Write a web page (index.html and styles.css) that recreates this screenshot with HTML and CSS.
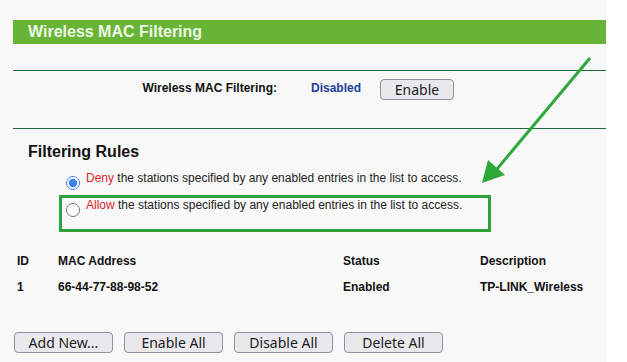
FILE: index.html
```html
<!DOCTYPE html>
<html lang="en">
<head>
  <meta charset="UTF-8">
  <title>Wireless MAC Filtering</title>
  <link rel="stylesheet" href="styles.css">
</head>
<body>
  <div class="page">
    <div class="title-bar">Wireless MAC Filtering</div>
    <div class="rule"></div>

    <div class="status-row">
      <span class="status-label">Wireless MAC Filtering:</span>
      <span class="status-value">Disabled</span>
      <button class="btn btn-enable">Enable</button>
    </div>
    <div class="rule"></div>

    <h2 class="section-title">Filtering Rules</h2>
    <div class="options">
      <label class="option">
        <input type="radio" name="rule" checked>
        <span><em class="keyword">Deny</em> the stations specified by any enabled entries in the list to access.</span>
      </label>
      <label class="option option-marked">
        <input type="radio" name="rule">
        <span><em class="keyword">Allow</em> the stations specified by any enabled entries in the list to access.</span>
      </label>
    </div>

    <div class="entries">
      <div class="cell">ID</div>
      <div class="cell">MAC Address</div>
      <div class="cell">Status</div>
      <div class="cell">Description</div>
      <div class="cell">1</div>
      <div class="cell">66-44-77-88-98-52</div>
      <div class="cell">Enabled</div>
      <div class="cell">TP-LINK_Wireless</div>
    </div>

    <div class="button-group">
      <button class="btn">Add New...</button>
      <button class="btn">Enable All</button>
      <button class="btn">Disable All</button>
      <button class="btn">Delete All</button>
    </div>

    <!-- annotation arrow -->
    <svg class="arrow" width="627" height="362" viewBox="0 0 627 362">
      <line x1="590" y1="58" x2="497" y2="169" stroke="#2ea83a" stroke-width="3"/>
      <polygon points="482,183 488,160 505,175" fill="#2ea83a"/>
    </svg>
  </div>
</body>
</html>
```

FILE: styles.css
```css
body {
  margin: 0;
  background: #ffffff;
  font-family: "Liberation Sans", Arial, sans-serif;
}
.page {
  position: relative;
  width: 606px;
  height: 362px;
  box-sizing: border-box;
  padding-top: 20px;
  background: #f8f8f8;
  overflow: hidden;
}
.title-bar {
  margin-left: 13px;
  height: 24px;
  line-height: 24px;
  padding-left: 15px;
  background: #67b437;
  color: #eef8e6;
  font-size: 16px;
  font-weight: bold;
}
.rule {
  margin-left: 13px;
  border-top: 1px solid #22693a;
}
.title-bar + .rule {
  margin-top: 26px;
}
.status-row {
  height: 57px;
  box-sizing: border-box;
  padding-top: 8px;
  display: flex;
  align-items: flex-start;
  font-size: 12px;
  font-weight: bold;
}
.status-label {
  width: 277px;
  text-align: right;
  line-height: 18px;
  color: #111;
}
.status-value {
  margin-left: 34px;
  line-height: 18px;
  color: #1e3f9a;
}
.btn {
  width: 99px;
  height: 21px;
  padding: 0;
  box-sizing: border-box;
  background: #e9e9ed;
  border: 1px solid #8f8f9d;
  border-radius: 4px;
  color: #1b1b1b;
  font-family: "Noto Sans", "Open Sans", sans-serif;
  font-size: 14px;
  line-height: 18px;
}
.btn-enable {
  width: 74px;
  margin-left: 19px;
}
.section-title {
  margin: 14px 0 0 28px;
  font-size: 16px;
  line-height: 18px;
  color: #111;
}
.options {
  margin: 7px 0 0 59px;
  width: 432px;
  font-size: 12px;
  color: #222;
}
.option {
  display: flex;
  align-items: flex-start;
  border: 3px solid transparent;
  line-height: 14px;
}
.option:first-child {
  padding-bottom: 2px;
}
.option input {
  width: 14px;
  height: 14px;
  margin: 5px 6px 0 4px;
  accent-color: #3c82e6;
}
.option-marked {
  border-color: #30a23b;
  padding-bottom: 12px;
}
.keyword {
  font-style: normal;
  color: #e0222a;
}
.entries {
  margin: 16px 0 0 13px;
  display: grid;
  grid-template-columns: 41px 285px 137px 1fr;
  grid-auto-rows: 26px;
  align-items: center;
  font-size: 12px;
  font-weight: bold;
  color: #111;
}
.cell {
  padding-left: 4px;
}
.button-group {
  margin: 32px 0 0 14px;
  display: flex;
  gap: 11px;
}
.arrow {
  position: absolute;
  left: 0;
  top: 0;
  pointer-events: none;
}
```
